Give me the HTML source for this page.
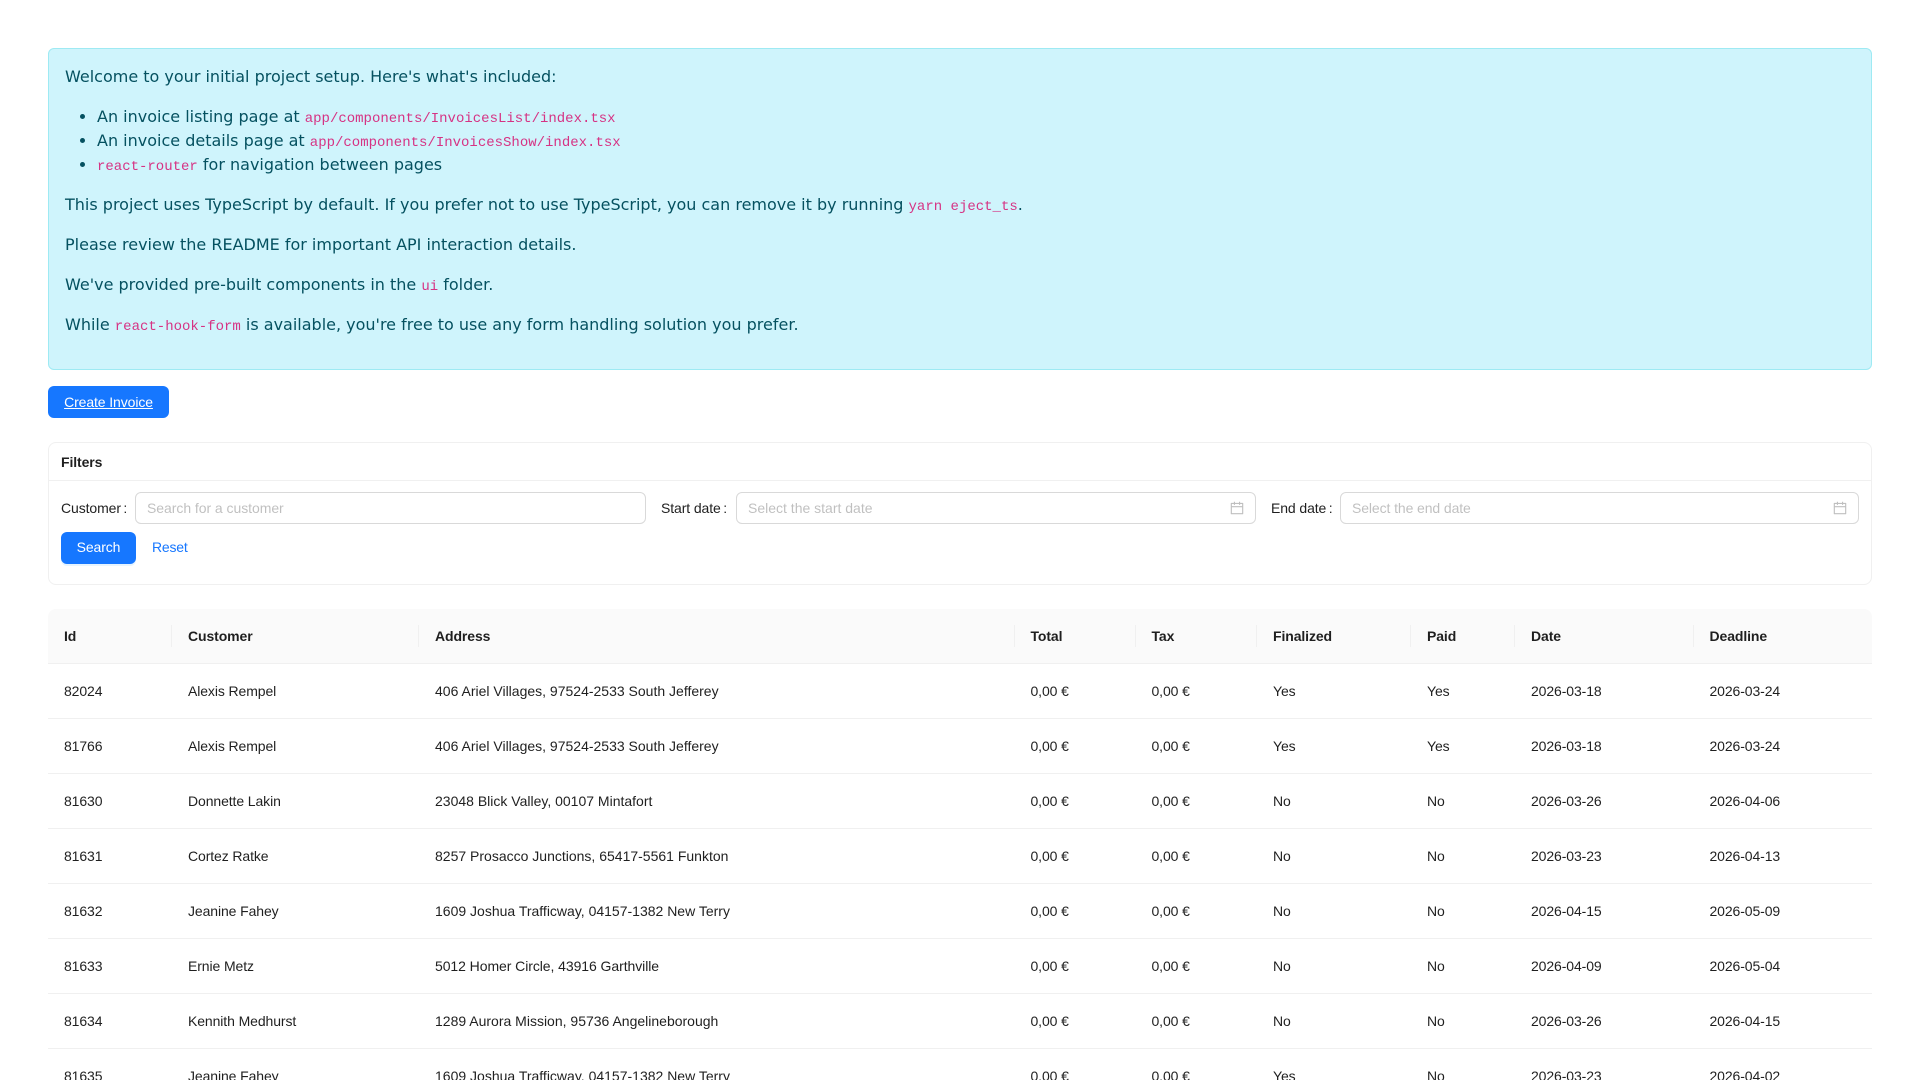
<!DOCTYPE html>
<html lang="en">
<head>
<meta charset="utf-8">
<title>Invoices</title>
<style>
html,body{margin:0;padding:0;width:1920px;height:1080px;overflow:hidden;background:#fff}
*{box-sizing:border-box}
.page{position:relative;width:1920px;height:1080px;overflow:hidden;background:#fff}
.alert{position:absolute;left:48px;top:48px;width:1824px;height:322px;padding:16px;background:#cff4fc;border:1px solid #9eeaf3;border-radius:6px;color:#055160;font:16px/24px "DejaVu Sans",sans-serif}
.alert p{margin:0 0 16px}
.alert ul{margin:0 0 16px;padding-left:32px}
code{font:14px "Liberation Mono",monospace;color:#d63384}
.ant,.ant *{font-family:"Liberation Sans",sans-serif;font-size:14px;letter-spacing:-.1px}
.abs{position:absolute}
.create{left:48px;top:386px;width:121px;height:32px;background:#1677ff;border-radius:6px;color:#fff;text-align:center;line-height:32px;text-decoration:underline}
.card{left:48px;top:442px;width:1824px;height:143px;border:1px solid #f0f0f0;border-radius:8px}
.cardline{left:48px;top:480px;width:1824px;height:1px;background:#f0f0f0}
.title{left:61px;top:451px;line-height:22px;font-weight:700;color:rgba(0,0,0,.88)}
.label{top:497px;line-height:22px;color:rgba(0,0,0,.88)}
.label span{margin-left:2.5px}
.field{top:492px;height:32px;border:1px solid #d9d9d9;border-radius:6px;padding-left:11px;line-height:30px;color:rgba(0,0,0,.25);background:#fff}
.cal{position:absolute;top:501px;width:14px;height:14px;fill:rgba(0,0,0,.25)}
.search{left:61px;top:532px;width:75px;height:32px;background:#1677ff;border-radius:6px;color:#fff;text-align:center;line-height:31px;box-shadow:0 2px 0 rgba(5,145,255,.1)}
.reset{left:152px;top:532px;line-height:31px;color:#1677ff;letter-spacing:-.2px}
table{position:absolute;left:48px;top:609px;width:1824px;table-layout:fixed;border-collapse:separate;border-spacing:0;color:rgba(0,0,0,.88)}
th,td{padding:0 16px 1px;height:55px;text-align:left;border-bottom:1px solid #f0f0f0;white-space:nowrap;line-height:22px}
th{background:#fafafa;font-weight:700;position:relative;letter-spacing:-.2px}
th:first-child{border-top-left-radius:8px}
th:last-child{border-top-right-radius:8px}
th+th::before{content:"";position:absolute;left:-1px;top:16px;width:1px;height:22px;background:#f0f0f0}
.ant td:nth-child(3){letter-spacing:0}
.ant td:nth-child(4),.ant td:nth-child(5),.ant th:nth-child(4),.ant th:nth-child(5){padding-left:15.5px}
.ant td:nth-child(9),.ant th:nth-child(9){padding-left:15.5px}
</style>
</head>
<body>
<div class="page">
<div class="alert">
<p>Welcome to your initial project setup. Here's what's included:</p>
<ul>
<li>An invoice listing page at <code>app/components/InvoicesList/index.tsx</code></li>
<li>An invoice details page at <code>app/components/InvoicesShow/index.tsx</code></li>
<li><code>react-router</code> for navigation between pages</li>
</ul>
<p>This project uses TypeScript by default. If you prefer not to use TypeScript, you can remove it by running <code>yarn eject_ts</code>.</p>
<p>Please review the README for important API interaction details.</p>
<p>We've provided pre-built components in the <code>ui</code> folder.</p>
<p>While <code>react-hook-form</code> is available, you're free to use any form handling solution you prefer.</p>
</div>
<div class="ant">
<div class="abs create">Create Invoice</div>
<div class="abs card"></div>
<div class="abs cardline"></div>
<div class="abs title">Filters</div>
<div class="abs label" style="left:61px">Customer<span>:</span></div>
<div class="abs field" style="left:135px;width:511px;letter-spacing:-.05px">Search for a customer</div>
<div class="abs label" style="left:661px">Start date<span>:</span></div>
<div class="abs field" style="left:736px;width:520px;letter-spacing:0">Select the start date</div>
<svg class="cal" style="left:1230px" viewBox="64 64 896 896"><path d="M880 184H712v-64c0-4.400-3.600-8-8-8h-56c-4.400 0-8 3.600-8 8v64H384v-64c0-4.400-3.600-8-8-8h-56c-4.400 0-8 3.600-8 8v64H144c-17.700 0-32 14.300-32 32v664c0 17.700 14.300 32 32 32h736c17.700 0 32-14.300 32-32V216c0-17.700-14.300-32-32-32zm-40 656H184V460h656v380zM184 392V256h128v48c0 4.400 3.600 8 8 8h56c4.400 0 8-3.600 8-8v-48h256v48c0 4.400 3.600 8 8 8h56c4.400 0 8-3.600 8-8v-48h128v136H184z"/></svg>
<div class="abs label" style="left:1271px">End date<span>:</span></div>
<div class="abs field" style="left:1340px;width:519px">Select the end date</div>
<svg class="cal" style="left:1833px" viewBox="64 64 896 896"><path d="M880 184H712v-64c0-4.400-3.600-8-8-8h-56c-4.400 0-8 3.600-8 8v64H384v-64c0-4.400-3.600-8-8-8h-56c-4.400 0-8 3.600-8 8v64H144c-17.700 0-32 14.300-32 32v664c0 17.700 14.300 32 32 32h736c17.700 0 32-14.300 32-32V216c0-17.700-14.300-32-32-32zm-40 656H184V460h656v380zM184 392V256h128v48c0 4.400 3.600 8 8 8h56c4.400 0 8-3.600 8-8v-48h256v48c0 4.400 3.600 8 8 8h56c4.400 0 8-3.600 8-8v-48h128v136H184z"/></svg>
<div class="abs search">Search</div>
<div class="abs reset">Reset</div>
<table>
<colgroup><col style="width:124px"><col style="width:247px"><col style="width:596px"><col style="width:121px"><col style="width:121px"><col style="width:154px"><col style="width:104px"><col style="width:179px"><col style="width:178px"></colgroup>
<thead><tr><th>Id</th><th>Customer</th><th>Address</th><th>Total</th><th>Tax</th><th>Finalized</th><th>Paid</th><th>Date</th><th>Deadline</th></tr></thead>
<tbody>
<tr><td>82024</td><td>Alexis Rempel</td><td>406 Ariel Villages, 97524-2533 South Jefferey</td><td>0,00 €</td><td>0,00 €</td><td>Yes</td><td>Yes</td><td>2026-03-18</td><td>2026-03-24</td></tr>
<tr><td>81766</td><td>Alexis Rempel</td><td>406 Ariel Villages, 97524-2533 South Jefferey</td><td>0,00 €</td><td>0,00 €</td><td>Yes</td><td>Yes</td><td>2026-03-18</td><td>2026-03-24</td></tr>
<tr><td>81630</td><td>Donnette Lakin</td><td>23048 Blick Valley, 00107 Mintafort</td><td>0,00 €</td><td>0,00 €</td><td>No</td><td>No</td><td>2026-03-26</td><td>2026-04-06</td></tr>
<tr><td>81631</td><td>Cortez Ratke</td><td>8257 Prosacco Junctions, 65417-5561 Funkton</td><td>0,00 €</td><td>0,00 €</td><td>No</td><td>No</td><td>2026-03-23</td><td>2026-04-13</td></tr>
<tr><td>81632</td><td>Jeanine Fahey</td><td>1609 Joshua Trafficway, 04157-1382 New Terry</td><td>0,00 €</td><td>0,00 €</td><td>No</td><td>No</td><td>2026-04-15</td><td>2026-05-09</td></tr>
<tr><td>81633</td><td>Ernie Metz</td><td style="letter-spacing:-.07px">5012 Homer Circle, 43916 Garthville</td><td>0,00 €</td><td>0,00 €</td><td>No</td><td>No</td><td>2026-04-09</td><td>2026-05-04</td></tr>
<tr><td>81634</td><td>Kennith Medhurst</td><td>1289 Aurora Mission, 95736 Angelineborough</td><td>0,00 €</td><td>0,00 €</td><td>No</td><td>No</td><td>2026-03-26</td><td>2026-04-15</td></tr>
<tr><td>81635</td><td>Jeanine Fahey</td><td>1609 Joshua Trafficway, 04157-1382 New Terry</td><td>0,00 €</td><td>0,00 €</td><td>Yes</td><td>No</td><td>2026-03-23</td><td>2026-04-02</td></tr>
</tbody>
</table>
</div>
</div>
</body>
</html>
